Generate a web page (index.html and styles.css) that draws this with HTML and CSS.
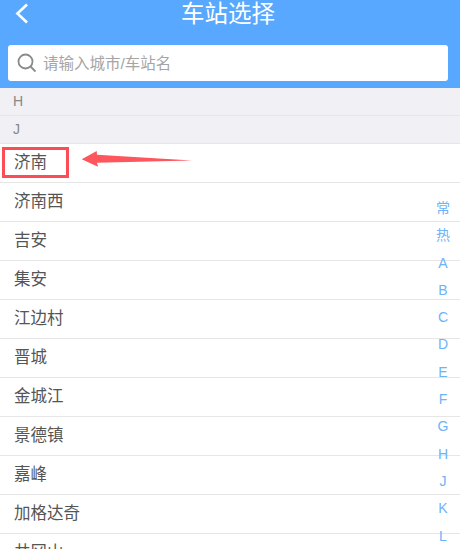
FILE: index.html
```html
<!DOCTYPE html>
<html lang="zh">
<head>
<meta charset="utf-8">
<title>车站选择</title>
<link rel="stylesheet" href="styles.css">
</head>
<body>
<div class="page">
  <header class="top">
    <div class="bar">
      <svg class="back" width="14" height="22" viewBox="0 0 14 22"><path d="M12 1.500 L2.400 10.500 L12 19.500" fill="none" stroke="#fff" stroke-width="2.600"/></svg>
      <h1 class="title">车站选择</h1>
    </div>
    <div class="search">
      <svg class="glass" width="20" height="20" viewBox="0 0 20 20"><circle cx="8.500" cy="8.500" r="7" fill="none" stroke="#8a8a8a" stroke-width="1.800"/><path d="M13.500 13.500 L18.500 18.500" stroke="#8a8a8a" stroke-width="1.800"/></svg>
      <span class="ph">请输入城市/车站名</span>
    </div>
  </header>
  <div class="sec">H</div>
  <div class="sec">J</div>
  <div class="row first"><span class="mark">济南</span>
    <svg class="arrow" width="112" height="16" viewBox="0 0 112 16"><path d="M0.700 8.300 L15.700 0 L16 3.700 L111 9.500 L16 11.700 L17 15.700 Z" fill="#fd575d"/></svg>
  </div>
  <div class="row">济南西</div>
  <div class="row">吉安</div>
  <div class="row">集安</div>
  <div class="row">江边村</div>
  <div class="row">晋城</div>
  <div class="row">金城江</div>
  <div class="row">景德镇</div>
  <div class="row">嘉峰</div>
  <div class="row">加格达奇</div>
  <div class="row">井冈山</div>
  <nav class="index">
    <span>常</span><span>热</span><span>A</span><span>B</span><span>C</span><span>D</span><span>E</span><span>F</span><span>G</span><span>H</span><span>J</span><span>K</span><span>L</span>
  </nav>
</div>
</body>
</html>
```
FILE: styles.css
```css
html, body { margin: 0; padding: 0; background: #fff; }
body { overflow: hidden; height: 549px; }
.page { position: relative; width: 460px; height: 549px; overflow: hidden; font-family: "Liberation Sans", "Noto Sans CJK SC", sans-serif; background: #fff; }
.top { background: #57a8fe; height: 88px; padding: 0 12px 0 8px; box-sizing: border-box; display: flex; flex-direction: column; }
.bar { height: 45px; display: flex; align-items: center; justify-content: center; position: relative; }
.back { position: absolute; left: 7px; top: 3px; }
.title { margin: 0 0 17px 0; font-size: 23.500px; font-weight: 400; color: #fff; line-height: 28px; }
.search { height: 36px; background: #fff; border-radius: 3px; display: flex; align-items: center; padding: 0 0 3px 9px; box-sizing: border-box; gap: 6px; }
.glass { margin-top: 2px; }
.ph { color: #a5a5a5; font-size: 15.500px; }
.sec { height: 28px; background: #f0f0f5; border-bottom: 1px solid #e6e6e6; box-sizing: border-box; padding-left: 13px; font-size: 14px; line-height: 26px; color: #888; }
.row { height: 39px; box-sizing: border-box; border-bottom: 1px solid #e6e6e6; padding-left: 14px; font-size: 16.500px; line-height: 37px; color: #555; }
.first { position: relative; }
.mark { position: absolute; left: 2px; top: 3px; width: 67px; height: 31px; border: 3px solid #fb4d55; box-sizing: border-box; padding-left: 9px; line-height: 25px; }
.arrow { position: absolute; left: 81px; top: 7px; }
.index { position: absolute; right: 9px; top: 195px; width: 16px; display: flex; flex-direction: column; align-items: center; color: #6db3f9; font-size: 14px; line-height: 27.300px; }
```
